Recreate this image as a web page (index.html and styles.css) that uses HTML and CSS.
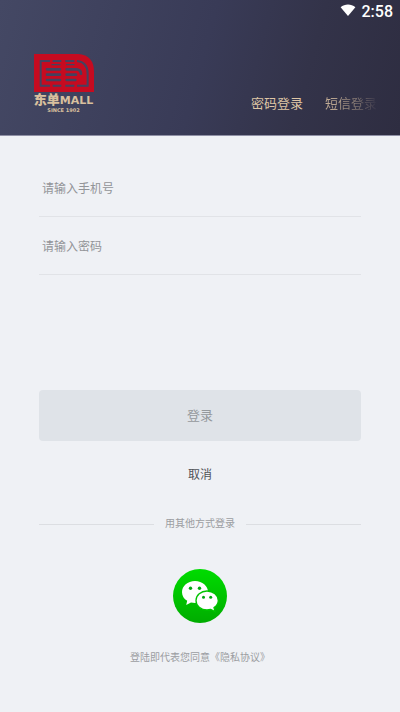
FILE: index.html
```html
<!DOCTYPE html>
<html lang="zh-CN">
<head>
<meta charset="utf-8">
<meta name="viewport" content="width=device-width, initial-scale=1">
<title>东单MALL</title>
<link rel="stylesheet" href="styles.css">
</head>
<body>
<header class="header">
  <div class="status">
    <svg class="wifi" viewBox="0 0 16 12" aria-hidden="true"><path d="M0.6 3.2C4.8-.4 11.2-.4 15.4 3.2L8 12Z" fill="#fff"/></svg>
    <span class="time">2:58</span>
  </div>
  <div class="top">
    <div class="brand">
      <svg class="mark" viewBox="0 0 180 114" aria-hidden="true">
        <path d="M0 0H132Q180 3 180 54V114H0Z" fill="#c60b20"/>
        <g fill="none" stroke="#44425f" stroke-width="6">
          <path d="M48 21H20V95H48M56 21H82M94 21H121M129 21Q161 24 161 59V95H129M56 95H82M94 95H121"/>
        </g>
        <g fill="none" stroke="#44425f" stroke-width="8" stroke-linecap="round">
          <path d="M39 46H78M39 62H78M39 78H78M98 46H128Q141 48 141 59M98 62H126M98 78H124"/>
          <path d="M54 32H78M98 32H120" stroke-width="4"/>
        </g>
      </svg>
      <div class="name">东单<span class="latin">MALL</span></div>
      <div class="since">SINCE 1902</div>
    </div>
    <nav class="tabs">
      <a class="tab" href="#password">密码登录</a>
      <a class="tab next" href="#sms">短信登录</a>
    </nav>
  </div>
</header>
<main class="main">
  <form>
    <input class="field" type="tel" placeholder="请输入手机号" aria-label="手机号">
    <input class="field" type="password" placeholder="请输入密码" aria-label="密码">
    <button class="login" type="submit">登录</button>
    <button class="cancel" type="button">取消</button>
  </form>
  <div class="other">用其他方式登录</div>
  <button class="wechat" type="button" aria-label="微信登录">
    <svg viewBox="0 0 54 54" aria-hidden="true">
      <defs><linearGradient id="g" x2="0" y2="1"><stop stop-color="#00dc00"/><stop offset="1" stop-color="#00ac00"/></linearGradient></defs>
      <circle cx="27" cy="27" r="27" fill="url(#g)"/>
      <path d="M22 12C14.600 12 9 17 9 23.200C9 26.800 11 29.800 14.200 31.800L13.200 36L18 33.600C19.300 33.900 20.600 34 22 34C29.400 34 35 29 35 23C35 17 29.400 12 22 12Z" fill="#fff"/>
      <path d="M34 22C27.900 22 23 26.200 23 31.500S27.900 41 34 41C35.300 41 36.500 40.800 37.700 40.500L42 42.600L41 38.600C43.700 36.800 45.300 34.300 45.300 31.500C45.300 26.200 40.200 22 34 22Z" fill="#fff" stroke="#00c400" stroke-width="1.300"/>
      <g fill="#00a810"><circle cx="17.500" cy="19.300" r="1.700"/><circle cx="26.500" cy="19.300" r="1.700"/><circle cx="30.500" cy="28.300" r="1.500"/><circle cx="37.700" cy="28.300" r="1.500"/></g>
    </svg>
  </button>
  <p class="terms">登陆即代表您同意<a href="#privacy">《隐私协议》</a></p>
</main>
</body>
</html>
```
FILE: styles.css
```css
* { box-sizing: border-box; }
body {
  margin: 0;
  background: #eff1f5;
  font-family: Roboto, "Noto Sans CJK SC", sans-serif;
  color: #9b9da1;
}
a { color: inherit; text-decoration: none; }
button { font: inherit; border: 0; padding: 0; background: none; }
.header {
  height: 136px;
  background: linear-gradient(105deg, #444864 0%, #393b57 50%, #333349 75%, #2e2d41 100%);
  border-bottom: 1px solid #8f90a5;
}
.status {
  display: flex;
  justify-content: flex-end;
  align-items: center;
  gap: 6px;
  height: 22px;
  padding-right: 7px;
  color: #fff;
  font-size: 16px;
  font-weight: 500;
}
.wifi { width: 16px; height: 12px; margin-bottom: 2px; }
.top {
  display: flex;
  justify-content: space-between;
  align-items: flex-end;
  padding: 32px 23px 0 33px;
}
.brand {
  display: flex;
  flex-direction: column;
  align-items: center;
  width: 61px;
  color: #d9c09e;
  white-space: nowrap;
}
.mark { width: 60px; height: 38px; }
.name {
  margin-top: 2px;
  font-size: 13px;
  line-height: 12px;
  font-weight: 900;
}
.latin { font-family: "DejaVu Sans", sans-serif; font-size: 11px; font-weight: 700; }
.since {
  font-family: "DejaVu Sans", sans-serif;
  font-size: 5px;
  line-height: 6px;
  font-weight: 700;
}
.tabs {
  display: flex;
  gap: 22px;
  font-size: 13px;
  line-height: 18px;
  color: #dfc6a5;
}
.next {
  color: transparent;
  background: linear-gradient(90deg, #c7b198 0%, #8e8078 55%, #333247 100%);
  background-clip: text;
}
.main { padding: 23px 39px; text-align: center; }
.field {
  display: block;
  width: 100%;
  height: 58px;
  padding: 2px 3px 0;
  border: 0;
  border-bottom: 1px solid #e1e3e7;
  background: none;
  font: inherit;
  font-size: 12px;
}
.field::placeholder { color: #929498; opacity: 1; }
.login {
  display: block;
  width: 100%;
  height: 51px;
  margin-top: 115px;
  padding-bottom: 2px;
  border-radius: 4px;
  background: #dfe3e8;
  color: #94989c;
  font-size: 13px;
}
.cancel {
  margin-top: 25px;
  font-size: 12px;
  line-height: 18px;
  color: #515358;
}
.other {
  display: flex;
  align-items: center;
  gap: 11px;
  margin-top: 31px;
  font-size: 10px;
  line-height: 18px;
}
.other::before, .other::after {
  content: "";
  flex: 1;
  height: 1px;
  background: #dcdee2;
}
.wechat {
  display: block;
  width: 54px;
  height: 54px;
  margin: 36px auto 0;
}
.wechat svg { display: block; }
.terms { margin: 26px 0 0; font-size: 10px; line-height: 18px; }
```
